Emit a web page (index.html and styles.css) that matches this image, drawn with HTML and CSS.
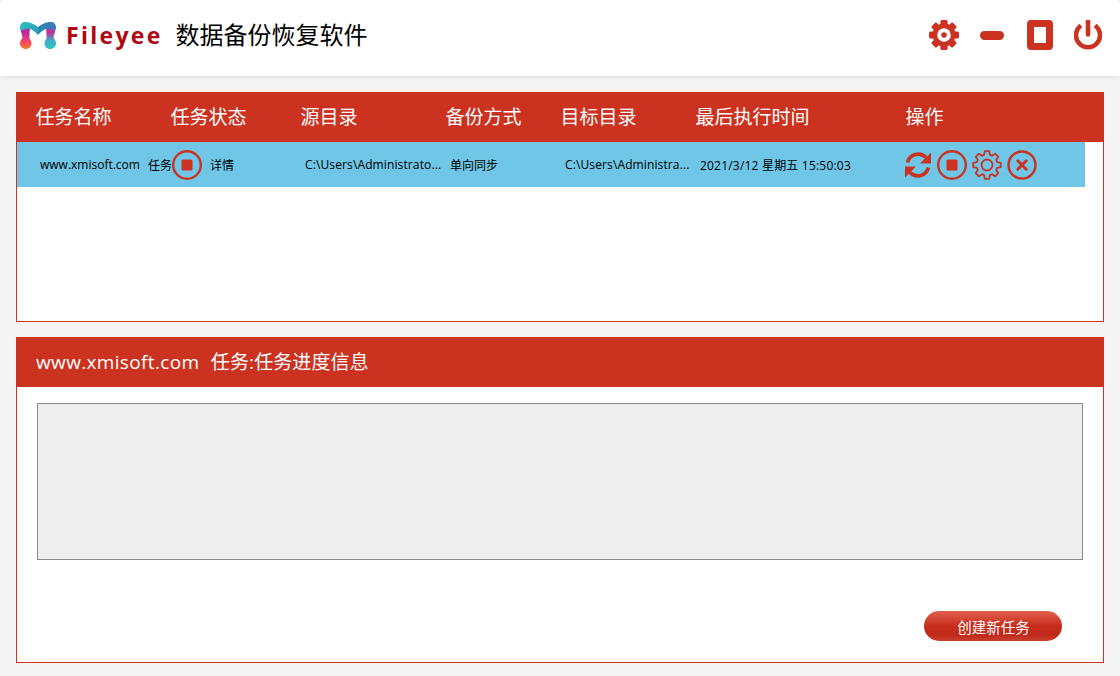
FILE: index.html
```html
<!DOCTYPE html>
<html lang="zh-CN">
<head>
<meta charset="utf-8">
<title>Fileyee 数据备份恢复软件</title>
<link rel="stylesheet" href="styles.css">
</head>
<body>
<svg class="defs" width="0" height="0">
  <defs>
    <path id="gear" d="M-2.89-10.09L-2.19-13.83L2.19-13.83L2.89-10.09L5.09-9.18L8.23-11.33L11.33-8.23L9.18-5.09L10.09-2.89L13.83-2.19L13.83 2.19L10.09 2.89L9.18 5.09L11.33 8.23L8.23 11.33L5.09 9.18L2.89 10.09L2.19 13.83L-2.19 13.83L-2.89 10.09L-5.09 9.18L-8.23 11.33L-11.33 8.23L-9.18 5.09L-10.09 2.89L-13.83 2.19L-13.83-2.19L-10.09-2.89L-9.18-5.09L-11.33-8.23L-8.23-11.33L-5.09-9.18Z"/>
    <linearGradient id="arcL" x1="0" x2="1" y1="0" y2="1">
      <stop offset="0" stop-color="#2fc4c4"/><stop offset="1" stop-color="#2a9ab4"/>
    </linearGradient>
    <linearGradient id="arcR" x1="0" x2="1" y1="1" y2="0">
      <stop offset="0" stop-color="#2a8cb4"/><stop offset="1" stop-color="#3a78b8"/>
    </linearGradient>
    <linearGradient id="dropL" x1="0" x2="0" y1="0" y2="1">
      <stop offset="0.25" stop-color="#b52fa0"/><stop offset="0.62" stop-color="#f0406e"/><stop offset="1" stop-color="#fb7a2e"/>
    </linearGradient>
    <linearGradient id="dropR" x1="0" x2="0" y1="0" y2="1">
      <stop offset="0.25" stop-color="#c0309a"/><stop offset="0.62" stop-color="#3fb0c4"/><stop offset="1" stop-color="#2cc8c4"/>
    </linearGradient>
  </defs>
</svg>

<header class="topbar">
  <div class="brand">
    <svg class="logo" viewBox="0 0 36 27" width="36" height="27">
      <path d="M0 5C0.500 9 2 12 2.500 16C1 17.500 0 19.500 0 21.500C0 24.500 2.500 27 5.800 27C9 27 11.500 24.500 11.500 21.500C11.500 19.500 10.500 18 9.500 16.500C9.500 13 9.500 10 10 6Z" fill="url(#dropL)"/>
      <path d="M36 5C35.500 9 34 12 33.500 16C35 17.500 36 19.500 36 21.500C36 24.500 33.500 27 30.200 27C27 27 24.500 24.500 24.500 21.500C24.500 19.500 25.500 18 26.500 16.500C26.500 13 26.500 10 26 6Z" fill="url(#dropR)"/>
      <path d="M0 5.500C0 2 2 0 5.500 0C10 0 14.500 2 18 5L18 13C15 10 12.500 7.500 9 6.800C6.500 6.500 4 7.500 2.500 8.500C1 8 0 7 0 5.500Z" fill="url(#arcL)"/>
      <path d="M36 5.500C36 2 34 0 30.500 0C26 0 21.500 2 18 5L18 13C21 10 23.500 7.500 27 6.800C29.500 6.500 32 7.500 33.500 8.500C35 8 36 7 36 5.500Z" fill="url(#arcR)"/>
    </svg>
    <span class="wordmark">Fileyee</span>
    <span class="app-title">数据备份恢复软件</span>
  </div>
  <div class="window-tools">
    <svg class="tool-gear" viewBox="-15 -15 30 30" width="30" height="30">
      <g class="red-fill">
        <rect x="-3.600" y="-15" width="7.200" height="30" rx="1.500"/>
        <rect x="-3.600" y="-15" width="7.200" height="30" rx="1.500" transform="rotate(45)"/>
        <rect x="-3.600" y="-15" width="7.200" height="30" rx="1.500" transform="rotate(90)"/>
        <rect x="-3.600" y="-15" width="7.200" height="30" rx="1.500" transform="rotate(135)"/>
        <circle r="11.500"/>
      </g>
      <circle r="6.800" class="white-fill"/>
      <circle r="2.800" class="red-fill"/>
    </svg>
    <span class="tool-min"></span>
    <span class="tool-max"></span>
    <svg class="tool-power" viewBox="0 0 28 30" width="28" height="30">
      <path d="M7 5.500A12 12 0 1 0 21 5.500" class="red-stroke thick"/>
      <path d="M14 1.500V14.500" class="red-stroke thick round"/>
    </svg>
  </div>
</header>

<main class="content">
  <section class="panel tasks">
    <div class="bar columns">
      <span>任务名称</span><span>任务状态</span><span>源目录</span><span>备份方式</span><span>目标目录</span><span>最后执行时间</span><span>操作</span>
    </div>
    <div class="task-row">
      <span>www.xmisoft.com</span>
      <span class="status">任务
        <svg class="stop" viewBox="0 0 30 30" width="30" height="30">
          <circle cx="15" cy="15" r="13.800" class="red-stroke medium"/>
          <rect x="9.500" y="9.500" width="11" height="11" rx="1.500" class="red-fill"/>
        </svg>
      </span>
      <span>详情</span>
      <span class="spaced">C:\Users\Administrato...</span>
      <span>单向同步</span>
      <span class="spaced">C:\Users\Administra...</span>
      <span class="spaced-more">2021/3/12 星期五 15:50:03</span>
      <span class="actions">
        <svg viewBox="0 0 28 28" width="28" height="28">
          <path d="M3.500 11.500A11 11 0 0 1 22 6.500" class="red-stroke bold"/>
          <path d="M27 1.500V12.500H16Z" class="red-fill"/>
          <path d="M24.500 16.500A11 11 0 0 1 6 21.500" class="red-stroke bold"/>
          <path d="M1 26.500V15.500H12Z" class="red-fill"/>
        </svg>
        <svg viewBox="0 0 30 30" width="30" height="30">
          <circle cx="15" cy="15" r="13.800" class="red-stroke medium"/>
          <rect x="9.500" y="9.500" width="11" height="11" rx="1.500" class="red-fill"/>
        </svg>
        <svg viewBox="-15 -15 30 30" width="30" height="30">
          <use href="#gear" class="red-stroke thin"/>
          <circle r="5.500" class="red-stroke thin"/>
        </svg>
        <svg viewBox="0 0 30 30" width="30" height="30">
          <circle cx="15" cy="15" r="13.500" class="red-stroke medium"/>
          <path d="M10.800 10.800L19.200 19.200M19.200 10.800L10.800 19.200" class="red-stroke bold-x round"/>
        </svg>
      </span>
    </div>
  </section>

  <section class="panel progress">
    <div class="bar progress-title">
      <span class="site">www.xmisoft.com</span><span class="info">任务:任务进度信息</span>
    </div>
    <div class="progress-body">
      <div class="log"></div>
      <div class="footer">
        <button class="create" type="button">创建新任务</button>
      </div>
    </div>
  </section>
</main>
</body>
</html>
```
FILE: styles.css
```css
* { box-sizing: border-box; }
html, body { margin: 0; height: 100%; }
body {
  width: 1120px;
  height: 676px;
  overflow: hidden;
  background: #f4f4f4;
  font-family: "Open Sans", "Noto Sans CJK SC", sans-serif;
  color: #000;
}
.defs { position: absolute; }
.red-fill { fill: #cb3220; }
.white-fill { fill: #fff; }
.red-stroke { fill: none; stroke: #cb3220; }
.thin { stroke-width: 1.800; stroke-linejoin: round; }
.medium { stroke-width: 2.400; }
.bold-x { stroke-width: 3; }
.bold { stroke-width: 3.600; }
.thick { stroke-width: 4.600; }
.round { stroke-linecap: round; }

.topbar {
  height: 76px;
  background: #fff;
  border-radius: 4px 4px 0 0;
  box-shadow: 0 1px 4px rgba(0, 0, 0, 0.1);
  display: flex;
  align-items: center;
  justify-content: space-between;
  padding: 0 18px 6px 20px;
}
.brand { display: flex; align-items: center; }
.logo { display: block; margin-top: 1px; }
.wordmark {
  margin-left: 10px;
  width: 109.500px;
  font-family: "Open Sans", sans-serif;
  font-size: 23px;
  font-weight: 700;
  letter-spacing: 2.300px;
  color: #b00712;
  line-height: 30px;
}
.app-title { font-size: 24px; line-height: 32px; }

.window-tools { display: flex; align-items: center; }
.tool-gear { display: block; }
.tool-min {
  width: 24px;
  height: 9px;
  margin-left: 21px;
  border-radius: 5px;
  background: #cb3220;
}
.tool-max {
  width: 26px;
  height: 30px;
  margin-left: 23px;
  border: 7px solid #cb3220;
  border-radius: 4px;
  background: #fff;
}
.tool-power { display: block; margin-left: 21px; }

.content {
  padding: 16px 16px 0;
  display: flex;
  flex-direction: column;
  gap: 15px;
}
.panel {
  background: #fff;
  border: 1px solid #cb3220;
}
.tasks { height: 230px; }
.progress { height: 326px; }

.bar {
  margin: -1px -1px 0;
  background: #cb3220;
  color: #fff;
  font-size: 19px;
  padding-left: 20px;
}
.columns {
  height: 50px;
  line-height: 50px;
  padding-left: 19.500px;
  display: grid;
  grid-template-columns: 135px 130px 145px 115px 135px 210px 1fr;
}
.task-row {
  width: 1068px;
  height: 45px;
  background: #6fc6e6;
  padding-left: 23px;
  display: grid;
  grid-template-columns: 108px 62px 95px 145px 115px 135px 202px 1fr;
  align-items: center;
  font-size: 12px;
  white-space: nowrap;
}
.spaced { letter-spacing: 0.120px; }
.spaced-more { letter-spacing: 0.200px; }
.status { display: flex; align-items: center; white-space: nowrap; }
.stop { display: block; flex: none; }
.actions { display: flex; align-items: center; gap: 5px; padding-left: 2px; }
.actions svg { display: block; flex: none; }

.progress-title {
  height: 50px;
  line-height: 50px;
  display: flex;
  gap: 11.500px;
}
.site { letter-spacing: 0.340px; }
.info { letter-spacing: 0.100px; }
.progress-body { padding: 16px 20px 0; }
.log {
  width: 1046px;
  height: 157px;
  background: #efefef;
  border: 1px solid #8a8a8a;
}
.footer {
  margin-top: 51px;
  width: 1046px;
  padding-right: 21px;
  display: flex;
  justify-content: flex-end;
}
.create {
  width: 138px;
  height: 30px;
  border: 0;
  border-radius: 15px;
  background: linear-gradient(#e2614f 0, #c72c1b 50%, #c0291a 80%, #c9402f 100%);
  color: #fff;
  font-family: inherit;
  font-size: 14.500px;
  padding: 0 0 0 1px;
}
```
